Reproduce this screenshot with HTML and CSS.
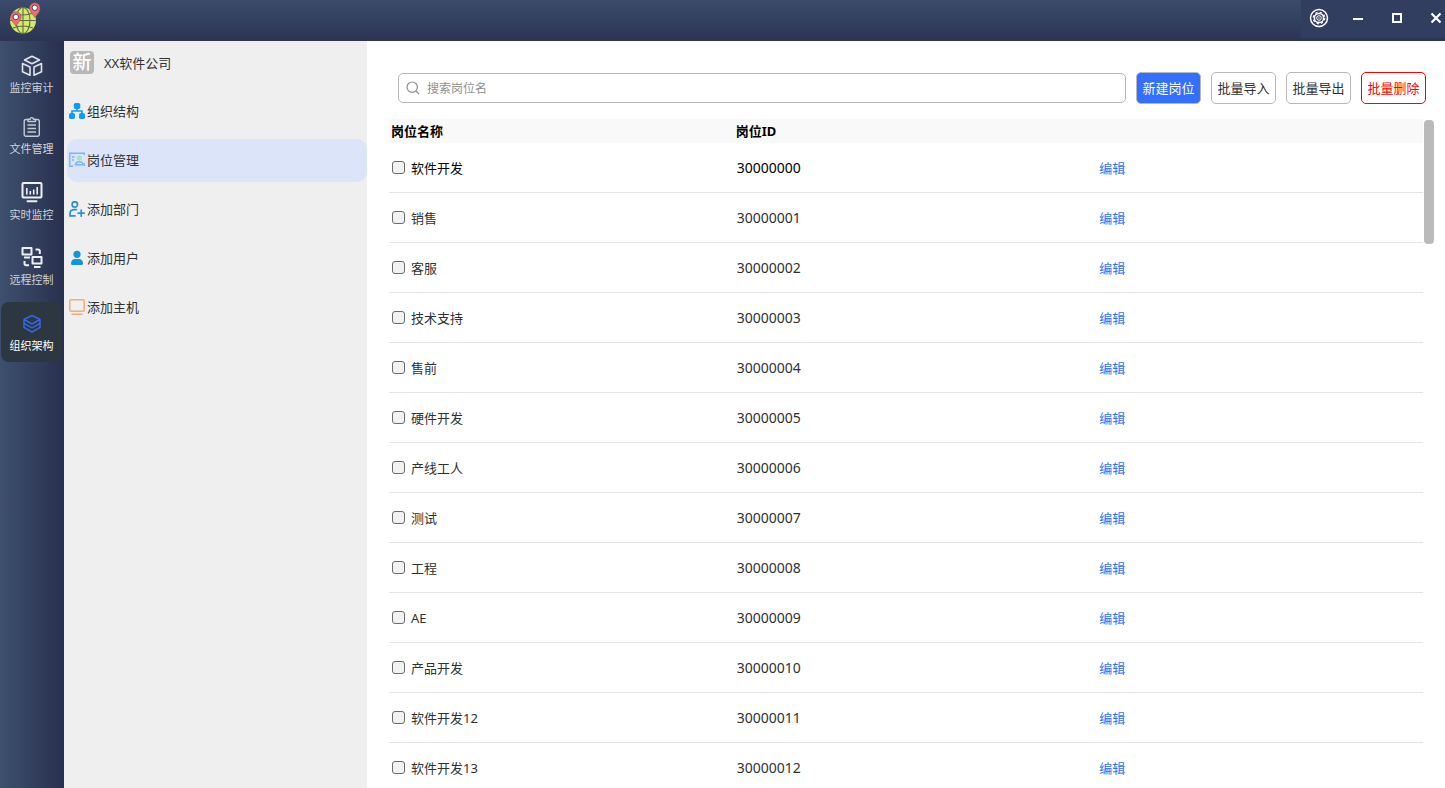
FILE: index.html
```html
<!DOCTYPE html>
<html lang="zh-CN">
<head>
<meta charset="utf-8">
<title>岗位管理</title>
<link rel="stylesheet" href="styles.css">
</head>
<body>
<header class="topbar">
  <svg class="logo" viewBox="0 0 32 32" fill="none">
    <circle cx="14" cy="18.500" r="13" fill="#d5e86a"/>
    <g stroke="#5d6b4a" stroke-width="1.100">
      <path d="M14 5.500v26M1 18.500h26M4 11q10 4 20 0M4 26q10-4 20 0"/>
      <ellipse cx="14" cy="18.500" rx="7" ry="13"/>
    </g>
    <path d="M7 24C3 19 1.500 17.500 1.500 15a5.300 5.300 0 0 1 10.600 0c0 2.500-1.100 4-5.100 9z" fill="#f06a6e" stroke="#8c4455" stroke-width=".5"/>
    <circle cx="6.800" cy="15" r="2.700" fill="#fff" stroke="#3a4565" stroke-width="1"/>
    <path d="M26 15.500C22 10.500 20.500 8.500 20.500 6a5.300 5.300 0 0 1 10.600 0c0 2.700-1.100 4.700-5.100 9.500z" fill="#f06a6e" stroke="#8c4455" stroke-width=".5"/>
    <circle cx="25.800" cy="5.800" r="2.700" fill="#fff" stroke="#3a4565" stroke-width="1"/>
  </svg>
  <div class="controls">
    <button class="control" aria-label="设置">
      <svg viewBox="0 0 20 20" fill="none" stroke="#fff">
        <circle cx="10" cy="10" r="8.500" stroke-width="1.500"/>
        <circle cx="10" cy="10" r="4.600" stroke-width="1.500"/>
        <circle cx="10" cy="10" r="5.700" stroke-width="1.300" stroke-dasharray="2.240 2.240"/>
        <circle cx="10" cy="10" r="2.300" stroke-width="1"/>
        <circle cx="10" cy="10" r=".7" fill="#fff" stroke="none"/>
      </svg>
    </button>
    <button class="control" aria-label="最小化">
      <svg viewBox="0 0 20 20"><path d="M5 10h10v2H5z" fill="#fff"/></svg>
    </button>
    <button class="control" aria-label="最大化">
      <svg viewBox="0 0 20 20" fill="none"><path d="M6 6h8v8H6z" stroke="#fff" stroke-width="2"/></svg>
    </button>
    <button class="control" aria-label="关闭">
      <svg viewBox="0 0 20 20" fill="none"><path d="M5.500 5.500l9 9M14.500 5.500l-9 9" stroke="#fff" stroke-width="2.200"/></svg>
    </button>
  </div>
</header>
<div class="workspace">
  <nav class="rail">
    <a class="rail-item" href="#">
      <svg viewBox="0 0 24 24" fill="none" stroke="#e2e5ea" stroke-width="1.600" stroke-linejoin="round">
        <path d="M12 2.200l7.500 3.800-7.500 3.800-7.500-3.800zM2.500 9.500l7.500 3.500v8.300l-7.500-3.500zM21.500 9.500l-7.500 3.500v8.300l7.500-3.500z"/>
      </svg>
      <span>监控审计</span>
    </a>
    <a class="rail-item" href="#">
      <svg viewBox="0 0 24 24" fill="none" stroke="#c5cad3" stroke-width="1.400" stroke-linejoin="round">
        <path d="M8 4.500H6a1.800 1.800 0 0 0-1.800 1.800v13.200A1.800 1.800 0 0 0 6 21.300h11.500a1.800 1.800 0 0 0 1.800-1.800V6.300a1.800 1.800 0 0 0-1.800-1.800h-2M8 6.500V4.200h2.200a1.600 1.600 0 0 1 3.200 0h2.100v2.300zM7.500 10h8.500M7.500 13.500h8.500M7.500 17h8.500"/>
      </svg>
      <span>文件管理</span>
    </a>
    <a class="rail-item" href="#">
      <svg viewBox="0 0 24 24" fill="none" stroke="#eef0f3" stroke-width="1.600">
        <rect x="2.500" y="2" width="19" height="14.500" rx="1" stroke-width="2"/>
        <path d="M6.800 7v6.500M10.300 10v3.500M13.700 8.500v5M17.200 6v7.500"/>
        <path d="M7.500 20.300h9" stroke-width="2" stroke-linecap="round"/>
      </svg>
      <span>实时监控</span>
    </a>
    <a class="rail-item" href="#">
      <svg viewBox="0 0 24 24" fill="none" stroke="#eef0f3" stroke-width="2" stroke-linejoin="round">
        <path d="M2.500 2h9v6.500h-9zM12.500 11h9v6.500h-9zM4 11.500h6M14 21h6.500M15.500 3.500h2.500q1.800 0 1.800 1.800V8M4.500 15v2.500q0 1.700 1.700 1.700H9"/>
      </svg>
      <span>远程控制</span>
    </a>
    <a class="rail-item rail-item-active" href="#">
      <svg viewBox="0 0 24 24" fill="none" stroke="#3366e8" stroke-width="1.500" stroke-linejoin="round">
        <path d="M12 3.500l8 4-8 4.500-8-4.500zM4 7.500v3.800l8 4.500 8-4.500V7.500M4 11.300v4l8 4.700 8-4.700v-4"/>
      </svg>
      <span>组织架构</span>
    </a>
  </nav>
  <aside class="sidebar">
    <div class="company">
      <span class="company-badge">新</span>
      <span>XX软件公司</span>
    </div>
    <a class="side-item" href="#">
      <svg viewBox="0 0 16 16" fill="#0d9bff">
        <rect x="4.800" y="0" width="6.500" height="6" rx="1.800"/><rect x="0" y="10" width="6" height="6" rx="1.800"/><rect x="10" y="10" width="6" height="6" rx="1.800"/>
        <path d="M8 5v3M3 11V8h10v3" fill="none" stroke="#0d9bff" stroke-width="1.600"/>
      </svg>
      <span>组织结构</span>
    </a>
    <a class="side-item side-item-active" href="#">
      <svg viewBox="0 0 16 16" fill="none" stroke="#75b5fb" stroke-width="1.400">
        <path d="M15.300 3V1.300H.8v12.900H4M3 5h2.500M3 8h2"/>
        <circle cx="10.300" cy="6" r="2.500" fill="#9ce5c5" stroke="none"/>
        <path d="M6.500 12.800q.3-3 3.800-3t3.800 3zM15.300 11.500v2.500"/>
      </svg>
      <span>岗位管理</span>
    </a>
    <a class="side-item" href="#">
      <svg viewBox="0 0 16 16" fill="none" stroke="#2196d8" stroke-width="1.700" stroke-linecap="round">
        <circle cx="5.800" cy="3.500" r="2.700"/><path d="M7.500 8.600H5Q1 8.800 1 12.500v2.400h5M12.200 9.200v6M9.200 12.200h6"/>
      </svg>
      <span>添加部门</span>
    </a>
    <a class="side-item" href="#">
      <svg viewBox="0 0 16 16" fill="#1296db">
        <circle cx="8" cy="4.300" r="3.600"/><path d="M2 13.500Q2.300 9 6 9h4q3.700 0 4 4.500 0 1.500-1.300 1.500H3.300Q2 15 2 13.500z"/>
      </svg>
      <span>添加用户</span>
    </a>
    <a class="side-item" href="#">
      <svg viewBox="0 0 16 16" fill="none" stroke="#f0ae75" stroke-width="1.500" stroke-linecap="round">
        <rect x=".8" y=".8" width="14.400" height="11.400" rx="1"/><path d="M3 15.200h10"/>
      </svg>
      <span>添加主机</span>
    </a>
  </aside>
  <main class="content">
    <div class="toolbar">
      <label class="search">
        <svg viewBox="0 0 16 16" fill="none" stroke="#8c8c8c" stroke-width="1.200" stroke-linecap="round">
          <circle cx="7.200" cy="7.200" r="5.200"/><path d="M11.200 11.200l2.600 2.600"/>
        </svg>
        <input type="text" placeholder="搜索岗位名" aria-label="搜索岗位名">
      </label>
      <button class="button button-primary">新建岗位</button>
      <button class="button">批量导入</button>
      <button class="button">批量导出</button>
      <button class="button button-danger">批量删除</button>
    </div>
    <div class="list">
      <table class="table">
        <thead><tr><th>岗位名称</th><th>岗位ID</th><th></th></tr></thead>
        <tbody>
          <tr><td><label class="name"><input type="checkbox">软件开发</label></td><td>30000000</td><td><a href="#">编辑</a></td></tr>
          <tr><td><label class="name"><input type="checkbox">销售</label></td><td>30000001</td><td><a href="#">编辑</a></td></tr>
          <tr><td><label class="name"><input type="checkbox">客服</label></td><td>30000002</td><td><a href="#">编辑</a></td></tr>
          <tr><td><label class="name"><input type="checkbox">技术支持</label></td><td>30000003</td><td><a href="#">编辑</a></td></tr>
          <tr><td><label class="name"><input type="checkbox">售前</label></td><td>30000004</td><td><a href="#">编辑</a></td></tr>
          <tr><td><label class="name"><input type="checkbox">硬件开发</label></td><td>30000005</td><td><a href="#">编辑</a></td></tr>
          <tr><td><label class="name"><input type="checkbox">产线工人</label></td><td>30000006</td><td><a href="#">编辑</a></td></tr>
          <tr><td><label class="name"><input type="checkbox">测试</label></td><td>30000007</td><td><a href="#">编辑</a></td></tr>
          <tr><td><label class="name"><input type="checkbox">工程</label></td><td>30000008</td><td><a href="#">编辑</a></td></tr>
          <tr><td><label class="name"><input type="checkbox">AE</label></td><td>30000009</td><td><a href="#">编辑</a></td></tr>
          <tr><td><label class="name"><input type="checkbox">产品开发</label></td><td>30000010</td><td><a href="#">编辑</a></td></tr>
          <tr><td><label class="name"><input type="checkbox">软件开发12</label></td><td>30000011</td><td><a href="#">编辑</a></td></tr>
          <tr><td><label class="name"><input type="checkbox">软件开发13</label></td><td>30000012</td><td><a href="#">编辑</a></td></tr>
        </tbody>
      </table>
      <div class="scroll-thumb"></div>
    </div>
  </main>
</div>
</body>
</html>
```
FILE: styles.css
```css
* {
  box-sizing: border-box;
}

body {
  margin: 0;
  height: 100vh;
  display: flex;
  flex-direction: column;
  overflow: hidden;
  background: #fff;
  color: #303133;
  font: 13px/20px "Noto Sans", "Noto Sans CJK SC", sans-serif;
}

a {
  color: inherit;
  text-decoration: none;
}

button,
input {
  font: inherit;
  margin: 0;
}

.topbar {
  flex: none;
  height: 41px;
  display: flex;
  justify-content: space-between;
  background: linear-gradient(#3b4b6c, #2b3553);
}

.logo {
  width: 32px;
  height: 32px;
  margin: 2px 0 0 9px;
}

.controls {
  display: flex;
  gap: 19px;
  height: 38px;
  padding-left: 8px;
  background: #323e60;
}

.control {
  width: 20px;
  height: 36px;
  padding: 0;
  border: 0;
  background: none;
  display: flex;
  align-items: center;
}

.control:last-child {
  margin-right: -1px;
}

.control svg {
  width: 20px;
  height: 20px;
}

.workspace {
  flex: 1;
  min-height: 0;
  display: flex;
}

.rail {
  flex: none;
  width: 64px;
  padding: 3px 2px 0 1px;
  display: grid;
  grid-template-rows: 61px 66px 65px 66px 60px;
  align-content: start;
  background: linear-gradient(to right, #3d506d, #28304e);
}

.rail-item {
  height: 60px;
  padding-top: 10px;
  display: flex;
  flex-direction: column;
  align-items: center;
  gap: 3px;
  border-radius: 8px;
  color: #d0d3d9;
  font-size: 11px;
  line-height: 14px;
}

.rail-item svg {
  width: 24px;
  height: 24px;
}

.rail-item-active {
  background: #2d3741;
  color: #fff;
}

.sidebar {
  flex: none;
  width: 303px;
  padding-left: 3px;
  display: flex;
  flex-direction: column;
  gap: 6px;
  background: #efefef;
}

.company,
.side-item {
  height: 43px;
  display: flex;
  align-items: center;
}

.company {
  gap: 10px;
  padding-left: 3px;
}

.company-badge {
  width: 24px;
  height: 23px;
  border-radius: 4px;
  background: #b7b7b7;
  color: #fff;
  font-size: 19px;
  font-weight: 500;
  line-height: 22px;
  text-align: center;
}

.side-item {
  gap: 2px;
  padding: 0 0 1px 2px;
  border-radius: 10px;
}

.side-item svg {
  width: 16px;
  height: 16px;
}

.side-item-active {
  background: #dbe4f8;
}

.content {
  flex: 1;
  min-width: 0;
  padding: 31px 11px 0 22px;
}

.toolbar {
  display: flex;
  align-items: center;
  gap: 10px;
  padding: 0 8px 0 9px;
}

.search {
  flex: 1;
  height: 30px;
  display: flex;
  align-items: center;
  gap: 6px;
  padding: 0 6px;
  border: 1px solid #b8b8b8;
  border-radius: 5px;
}

.search svg {
  width: 16px;
  height: 16px;
}

.search input {
  flex: 1;
  padding: 1px 0 0;
  border: 0;
  outline: 0;
  background: none;
  font-size: 12px;
}

.search input::placeholder {
  color: #8f8f8f;
}

.button {
  width: 65px;
  height: 32px;
  padding: 0;
  border: 1px solid #b8b8b8;
  border-radius: 5px;
  background: #fff;
  color: #303133;
}

.button-primary {
  background: #3370ff;
  color: #fff;
}

.button-danger {
  border-color: #f00;
  color: #f00;
}

.list {
  display: flex;
  align-items: flex-start;
  gap: 1px;
  margin-top: 15px;
}

.table {
  flex: 1;
  width: 100%;
  min-width: 0;
  table-layout: fixed;
  border-collapse: separate;
  border-spacing: 0;
}

th {
  height: 24px;
  padding: 0 2px;
  background: #f9f9f9;
  color: #000;
  font-weight: 700;
  text-align: left;
}

td {
  height: 50px;
  padding: 0 3px;
  border-bottom: 1px solid #e3e4e8;
}

td:nth-child(2) {
  font-size: 14px;
}

td:last-child {
  padding-left: 21px;
}

td a {
  color: #3370ff;
}

tbody tr:first-child {
  color: #000;
}

.name {
  display: flex;
  align-items: center;
  gap: 6px;
}

.name input {
  appearance: none;
  width: 13px;
  height: 13px;
  border: 1px solid #6b6b6b;
  border-radius: 3px;
  background: #f2f2f2;
}

.scroll-thumb {
  flex: none;
  width: 10px;
  height: 124px;
  margin-top: 1px;
  border-radius: 4px;
  background: #bababa;
}
```
